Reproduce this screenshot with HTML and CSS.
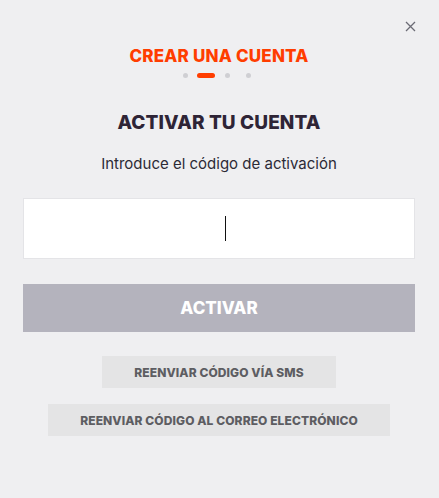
FILE: index.html
```html
<!DOCTYPE html>
<html lang="es">
<head>
<meta charset="utf-8">
<title>Crear una cuenta</title>
<link rel="stylesheet" href="styles.css">
</head>
<body>
<div class="modal">
  <button class="close" aria-label="Cerrar">
    <svg width="11" height="11" viewBox="0 0 11 11"><path d="M1 1L10 10M10 1L1 10" stroke="#6b6b75" stroke-width="1.3" fill="none"/></svg>
  </button>
  <h2 class="step-title">CREAR UNA CUENTA</h2>
  <div class="steps">
    <span class="slot"><span class="dot"></span></span>
    <span class="slot"><span class="dot active"></span></span>
    <span class="slot"><span class="dot"></span></span>
    <span class="slot"><span class="dot"></span></span>
  </div>
  <h1 class="title">ACTIVAR TU CUENTA</h1>
  <p class="subtitle">Introduce el código de activación</p>
  <div class="input"><span class="caret"></span></div>
  <button class="primary">ACTIVAR</button>
  <button class="secondary">REENVIAR CÓDIGO VÍA SMS</button>
  <button class="secondary">REENVIAR CÓDIGO AL CORREO ELECTRÓNICO</button>
</div>
</body>
</html>
```
FILE: styles.css
```css
html, body {
  margin: 0;
  padding: 0;
  background: #efeff1;
}
body {
  font-family: Inter, "Liberation Sans", sans-serif;
  width: 439px;
  height: 498px;
}
.modal {
  position: relative;
  display: flex;
  flex-direction: column;
  align-items: center;
  padding: 46px 24px 0 23px;
}
.close {
  position: absolute;
  top: 21px;
  right: 23px;
  background: none;
  border: 0;
  padding: 0;
  width: 11px;
  height: 11px;
  line-height: 0;
}
.step-title {
  margin: 0;
  font-size: 17px;
  line-height: 20px;
  font-weight: 800;
  color: #ff3d00;
  letter-spacing: 0.2px;
}
.steps {
  display: flex;
  margin-top: 7px;
  height: 5px;
  padding-right: 5px;
}
.slot {
  width: 21px;
  display: flex;
  justify-content: center;
}
.dot {
  width: 5px;
  height: 5px;
  border-radius: 3px;
  background: #cfcfd3;
}
.dot.active {
  width: 18px;
  background: #ff3d00;
}
.title {
  margin: 33px 0 0;
  font-size: 19px;
  line-height: 23px;
  font-weight: 800;
  color: #2e2436;
  letter-spacing: 0.1px;
}
.subtitle {
  margin: 20px 0 0;
  font-size: 15px;
  line-height: 20px;
  color: #2c2a36;
}
.input {
  margin-top: 24px;
  width: 392px;
  height: 61px;
  box-sizing: border-box;
  background: #fff;
  border: 1px solid #e4e4e7;
  display: flex;
  justify-content: center;
  align-items: center;
}
.caret {
  width: 1px;
  height: 25px;
  background: #111;
  margin-left: 13px;
}
.primary {
  margin-top: 25px;
  width: 392px;
  height: 48px;
  border: 0;
  background: #b4b3bd;
  color: #fff;
  font-family: inherit;
  font-size: 17px;
  font-weight: 800;
}
.secondary {
  height: 32px;
  border: 0;
  background: #e4e4e5;
  color: #5d5d62;
  font-family: inherit;
  font-size: 12px;
  font-weight: 800;
  letter-spacing: 0.1px;
  padding: 0 32px;
}
.primary + .secondary {
  margin-top: 24px;
}
.secondary + .secondary {
  margin-top: 16px;
}
```
